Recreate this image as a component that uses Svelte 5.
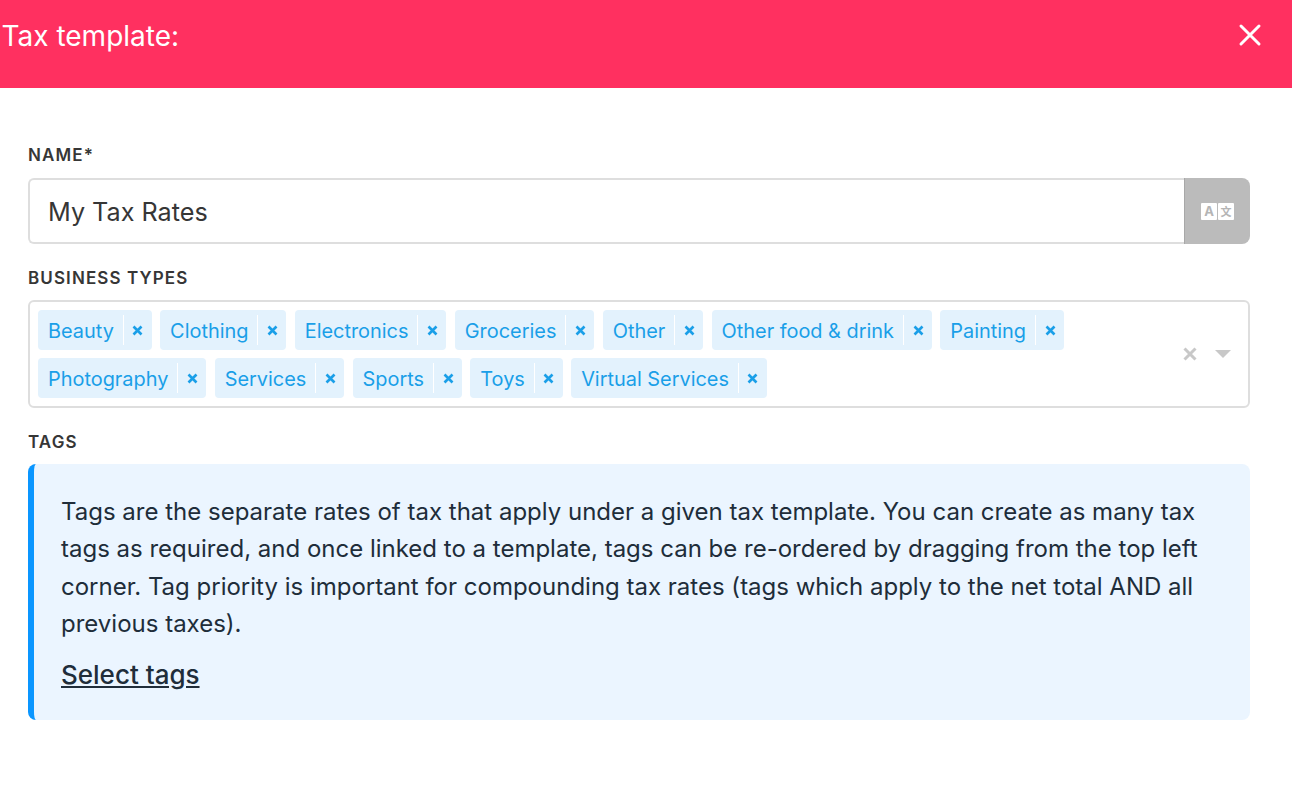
<script>
  const types = ['Beauty', 'Clothing', 'Electronics', 'Groceries', 'Other', 'Other food & drink', 'Painting', 'Photography', 'Services', 'Sports', 'Toys', 'Virtual Services']
</script>

<header class="topbar">
  <h1>Tax template:</h1>
  <button class="close" aria-label="Close">
    <svg width="24" height="24" viewBox="0 0 24 24"><path d="M3 3 21 21M21 3 3 21" stroke="#fff" stroke-width="3" stroke-linecap="round" /></svg>
  </button>
</header>

<main class="form">
  <label class="field-label" for="name">NAME*</label>
  <div class="name-group">
    <input id="name" value="My Tax Rates" />
    <span class="translate">
      <span class="lang">A</span>
      <span class="lang cjk">文</span>
    </span>
  </div>

  <div class="field-label second">BUSINESS TYPES</div>
  <div class="select">
    <div class="chips">
      {#each types as t}
        <span class="chip">
          <span class="chip-text">{t}</span>
          <span class="chip-x">
            <svg width="11" height="11" viewBox="0 0 11 11"><path d="M1.500 1.500 9.500 9.500M9.500 1.500 1.500 9.500" stroke="#1a9fe8" stroke-width="2.600" /></svg>
          </span>
        </span>
      {/each}
    </div>
    <div class="select-controls">
      <svg width="14" height="14" viewBox="0 0 14 14"><path d="M1.500 1.500 12.500 12.500M12.500 1.500 1.500 12.500" stroke="#c8c8c8" stroke-width="3" /></svg>
      <span class="caret"></span>
    </div>
  </div>

  <div class="field-label third">TAGS</div>
  <div class="notice">
    <p>Tags are the separate rates of tax that apply under a given tax template. You can create as many tax tags as required, and once linked to a template, tags can be re-ordered by dragging from the top left corner. Tag priority is important for compounding tax rates (tags which apply to the net total AND all previous taxes).</p>
    <a href="#tags">Select tags</a>
  </div>
</main>

<style>
  :global(body) {
    margin: 0;
    background: #fff;
    font-family: Inter, "Liberation Sans", sans-serif;
    color: #202b33;
  }

  .topbar {
    height: 88px;
    background: #ff3060;
    display: flex;
    align-items: center;
    justify-content: space-between;
    padding: 0 30px 17px 1.500px;
    box-sizing: border-box;
  }

  h1 {
    margin: 0;
    font-size: 28px;
    font-weight: 400;
    color: #fff;
  }

  .close {
    background: none;
    border: 0;
    padding: 0 0 1px;
    display: flex;
  }

  .form {
    padding: 57px 42px 0 28px;
  }

  .field-label {
    display: block;
    font-size: 17px;
    font-weight: 600;
    line-height: 20px;
    letter-spacing: 1.1px;
    color: #363636;
    margin-bottom: 13px;
  }

  .second, .third {
    margin-top: 24px;
    margin-bottom: 12px;
  }

  .name-group {
    display: flex;
    height: 66px;
  }

  input {
    flex: 1;
    min-width: 0;
    box-sizing: border-box;
    border: 2px solid #dedede;
    border-right: 0;
    border-radius: 6px 0 0 6px;
    padding: 1px 18px 0;
    font: 400 25.2px Inter, "Liberation Sans", sans-serif;
    color: #363636;
    outline: none;
  }

  .translate {
    width: 66px;
    box-sizing: border-box;
    background: #bbb;
    border-left: 1px solid #a8a8a8;
    border-radius: 0 8px 8px 0;
    display: flex;
    align-items: center;
    justify-content: center;
    gap: 1px;
  }

  .lang {
    width: 16px;
    height: 17px;
    background: #fff;
    border-radius: 1px;
    color: #b5b5b5;
    font-size: 13px;
    font-weight: 700;
    line-height: 17px;
    text-align: center;
  }

  .cjk {
    font: 700 11px/17px "Noto Sans CJK SC", sans-serif;
  }

  .select {
    display: flex;
    align-items: center;
    border: 2px solid #dedede;
    border-radius: 6px;
    padding: 8px 17px 8px 8px;
  }

  .chips {
    flex: 1;
    display: flex;
    flex-wrap: wrap;
    gap: 8px 8.300px;
  }

  .chip {
    display: flex;
    align-items: center;
    height: 40px;
    background: #e3f2fd;
    color: #1a9fe8;
    border-radius: 4px;
    font-size: 19.900px;
  }

  .chip-text {
    padding: 2px 9px 0 10px;
    border-right: 1px solid #fff;
    line-height: 28px;
  }

  .chip-x {
    width: 28px;
    display: flex;
    justify-content: center;
  }

  .select-controls {
    display: flex;
    align-items: center;
    gap: 18px;
  }

  .caret {
    width: 0;
    height: 0;
    border-left: 8px solid transparent;
    border-right: 8px solid transparent;
    border-top: 8px solid #c8c8c8;
  }

  .notice {
    background: #ebf5ff;
    border-left: 6px solid #0a96ff;
    border-radius: 8px;
    padding: 29px 28px 30px 27px;
  }

  .notice p {
    margin: 0 0 17px;
    font-size: 24px;
    line-height: 37.300px;
    color: #202d3a;
  }

  .notice a {
    color: #202d3a;
    font-size: 26px;
    font-weight: 500;
    text-decoration: underline;
  }
</style>
